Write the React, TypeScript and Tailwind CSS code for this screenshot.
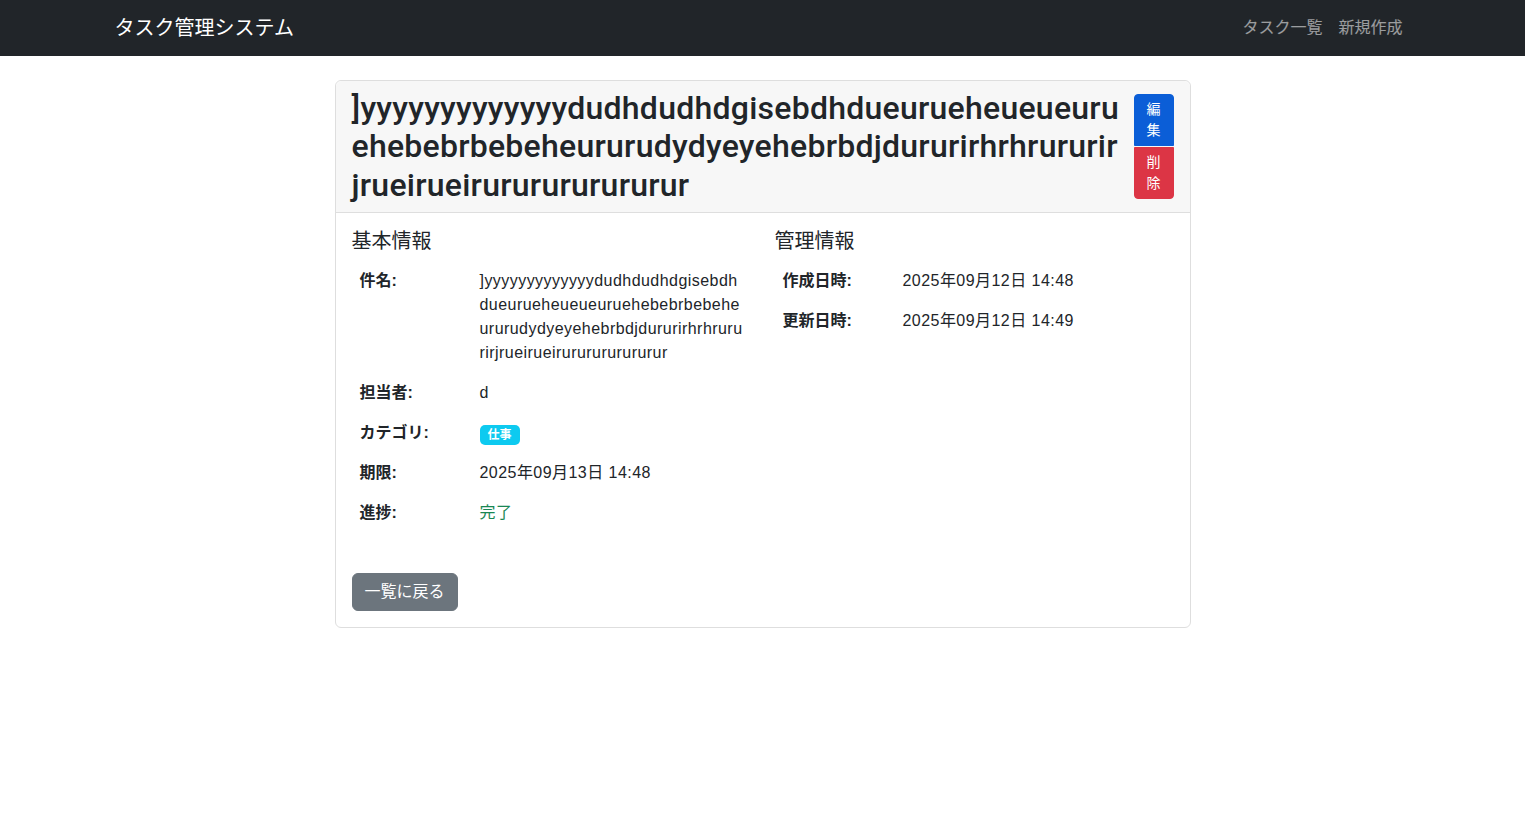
const font = { fontFamily: '"Liberation Sans", "Noto Sans CJK JP", sans-serif' };

const title =
  ']yyyyyyyyyyyyydudhdudhdgisebdhdueurueheueueuruehebebrbebeheururudydyeyehebrbdjdururirhrhrururirjrueirueirururururururur';

function InfoRow({ label, children }: { label: string; children: React.ReactNode }) {
  return (
    <tr>
      <th className="w-[120px] p-2 text-left align-top font-bold">{label}</th>
      <td className="p-2 align-top break-all tracking-[0.45px]">{children}</td>
    </tr>
  );
}

export default function App() {
  return (
    <div className="min-h-screen bg-white text-[16px] leading-6 text-[#212529]" style={font}>
      {/* ナビバー */}
      <nav className="h-14 bg-[#212529]">
        <div className="mx-auto flex h-full w-[1320px] items-center justify-between px-3">
          <span className="text-[20px] text-white">タスク管理システム</span>
          <div className="flex">
            <span className="px-2 text-white/55">タスク一覧</span>
            <span className="px-2 text-white/55">新規作成</span>
          </div>
        </div>
      </nav>

      <div className="mx-auto mt-6 w-[856px]">
        <div className="rounded-md border border-[#dedede]">
          {/* ヘッダー */}
          <div className="flex items-center justify-between gap-2 rounded-t-md border-b border-[#dedede] bg-[#f7f7f7] px-4 py-2">
            <h2
              className="min-w-0 break-all text-[32px] font-medium leading-[38.4px] tracking-[0.25px]"
              style={{ fontFamily: 'Roboto, "Noto Sans CJK JP", sans-serif' }}
            >
              {title}
            </h2>
            <div className="flex w-[40px] shrink-0 flex-col gap-px text-[14px] leading-[21px] text-white">
              <button className="rounded-t border border-[#0b5ed7] bg-[#0b5ed7] px-2 py-1">編集</button>
              <button className="rounded-b border border-[#dc3545] bg-[#dc3545] px-2 py-1">削除</button>
            </div>
          </div>

          {/* 本文 */}
          <div className="p-4">
            <div className="grid grid-cols-2 gap-6">
              <div>
                <h5 className="mb-2 text-[20px] font-normal leading-6">基本情報</h5>
                <table className="w-full table-fixed">
                  <tbody>
                    <InfoRow label="件名:">{title}</InfoRow>
                    <InfoRow label="担当者:">d</InfoRow>
                    <InfoRow label="カテゴリ:">
                      <span className="inline-block translate-y-[1px] rounded-[5px] bg-[#0dcaf0] px-[8px] py-[3px] text-[12px] font-bold leading-[14px] tracking-normal text-white">
                        仕事
                      </span>
                    </InfoRow>
                    <InfoRow label="期限:">2025年09月13日 14:48</InfoRow>
                    <InfoRow label="進捗:">
                      <span className="text-[#198754]">完了</span>
                    </InfoRow>
                  </tbody>
                </table>
              </div>
              <div>
                <h5 className="mb-2 text-[20px] font-normal leading-6">管理情報</h5>
                <table className="w-full table-fixed">
                  <tbody>
                    <InfoRow label="作成日時:">2025年09月12日 14:48</InfoRow>
                    <InfoRow label="更新日時:">2025年09月12日 14:49</InfoRow>
                  </tbody>
                </table>
              </div>
            </div>

            <div className="mt-10">
              <button className="rounded-md border border-[#6c757d] bg-[#6c757d] px-3 py-1.5 text-white">
                一覧に戻る
              </button>
            </div>
          </div>
        </div>
      </div>
    </div>
  );
}
